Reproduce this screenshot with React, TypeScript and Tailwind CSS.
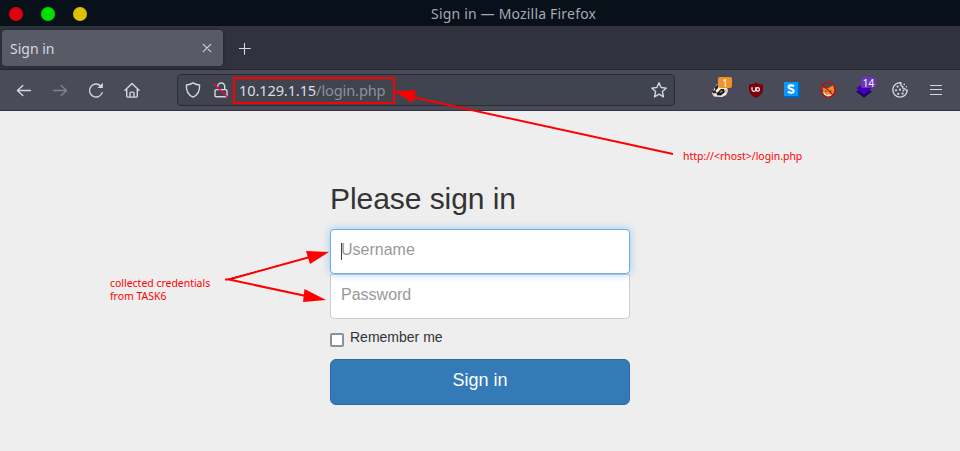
import React from "react";

const line = {
  fill: "none",
  stroke: "#d3d7e2",
  strokeWidth: 1.4,
  strokeLinecap: "round" as const,
  strokeLinejoin: "round" as const,
};

function Slot({ children, className = "" }: { children: React.ReactNode; className?: string }) {
  return <div className={`flex w-9 shrink-0 items-center justify-center ${className}`}>{children}</div>;
}

function Glyph({ children, className = "" }: { children: React.ReactNode; className?: string }) {
  return (
    <svg width="16" height="16" viewBox="0 0 16 16" className={`shrink-0 overflow-visible ${className}`} {...line}>
      {children}
    </svg>
  );
}

function TitleBar() {
  return (
    <header className="grid h-[26px] grid-cols-[431px_1fr] items-center bg-[#08101a]">
      <div className="flex gap-[18px] pl-[9px]">
        <span className="size-[14px] rounded-full bg-[#df000d]" />
        <span className="size-[14px] rounded-full bg-[#00df00]" />
        <span className="size-[14px] rounded-full bg-[#dfbf00]" />
      </div>
      <span className="whitespace-pre pt-px text-[14px] leading-[26px] tracking-[0.19px] text-[#a7abb1]">Sign in — Mozilla Firefox</span>
    </header>
  );
}

function TabBar() {
  return (
    <div className="flex h-11 items-center border-b border-[#20222c] bg-[#30333d] pl-[2px]">
      <div className="flex h-9 w-[221px] items-center justify-between rounded bg-[#585a66] pr-[11px] pl-2 shadow-[0_0_3px_rgba(0,0,0,0.35)]">
        <span className="pt-[2px] text-[14px] leading-9 text-[#d3d7e2]">Sign in</span>
        <svg width="10" height="10" viewBox="0 0 10 10" {...line} strokeWidth={1.1}>
          <path d="M1.3 1.3 8.7 8.7M8.7 1.3 1.3 8.7" />
        </svg>
      </div>
      <svg width="12" height="12" viewBox="0 0 12 12" className="mt-[2px] ml-4" {...line} strokeWidth={1.1}>
        <path d="M5.5 .3v11M.3 5.5h11" />
      </svg>
    </div>
  );
}

function AddressBar() {
  return (
    <div className="ml-[28px] flex h-8 w-[498px] items-center rounded-[4px] border border-[#292c37] bg-[#40444f] pl-[7px]">
      <Glyph>
        <path d="M8 .9C6 2.5 3.7 2.9 1.4 3c-.3 5.4 1.5 9.9 6.6 12.1 5.1-2.2 6.9-6.7 6.6-12.1C12.3 2.9 10 2.5 8 .9Z" />
      </Glyph>
      <Glyph className="ml-3">
        <path d="M3.2 7.6h9.6c.7 0 1.2.5 1.2 1.2v4.7c0 .7-.5 1.2-1.2 1.2H3.2c-.7 0-1.2-.5-1.2-1.2V8.8c0-.7.5-1.2 1.2-1.2ZM4.7 4.4a3.5 3.5 0 0 1 7 .2v2.7" />
        <path d="m1 2 13.5 13.3" stroke="#f00642" />
      </Glyph>
      <div className="ml-1 flex h-[27px] w-[162px] items-center border-2 border-[#ff0000] pl-1">
        <span className="whitespace-nowrap text-[14.6px] leading-5 tracking-[-0.13px] text-[#d9dce5]">
          10.129.1.15<span className="text-[#8c909b]">/login.php</span>
        </span>
      </div>
      <Glyph className="mr-[7px] ml-auto">
        <path d="m8 .8 2.1 4.7 5.2.6-3.9 3.5 1.1 5.2L8 12.2l-4.5 2.6 1.1-5.2L.7 6.1l5.2-.6Z" />
      </Glyph>
    </div>
  );
}

function Badge({ children, className }: { children: React.ReactNode; className: string }) {
  return (
    <span className={`absolute flex h-[11px] items-center justify-center rounded-[2px] text-[10px] leading-none text-white ${className}`}>
      {children}
    </span>
  );
}

function Extensions() {
  return (
    <div className="ml-auto flex items-center pr-[6px]">
      <Slot className="relative">
        <svg width="18" height="16" viewBox="0 0 18 16" className="overflow-visible">
          <path d="M2.5 8 6 2h9l2 7-2 4-4 2-8-.5-2-3Z" fill="#f4f1eb" />
          <path d="m4 5 3-3v4l-3 3ZM1 9l3-1 2 3-4 .5Z" fill="#29252a" />
          <path d="m5.500 11.500 4.500-4.500h3l1 3-4 3.500-4-.2Z" fill="#16161a" />
          <path d="m8 11 3-3 .5 2Z" fill="#aaa" />
          <path d="m13.500 7 3 .5.500 2.500-3 1ZM2 12l2 1-1 1.500Z" fill="#e9bd87" />
        </svg>
        <Badge className="top-[-5px] left-[16px] w-[14px] bg-[#f0932b]">1</Badge>
      </Slot>
      <Slot>
        <svg width="16" height="16" viewBox="0 0 16 16">
          <path d="M8 .5c2.2 1.5 4.2 2 7 2v5.2c0 4-3 6.3-7 8.1-4-1.8-7-4.1-7-8.1V2.5c2.8 0 4.8-.5 7-2Z" fill="#800008" />
          <path d="M4 5.3v2.2a1.9 1.9 0 0 0 3.8 0V5.3" fill="none" stroke="#fff" strokeWidth="1.2" />
          <circle cx="9.7" cy="7.4" r="1.7" fill="none" stroke="#fff" strokeWidth="1.2" />
        </svg>
      </Slot>
      <Slot>
        <svg width="16" height="16" viewBox="0 0 16 16">
          <path d="M0 14h14V0l2 2v14H2Z" fill="#0065b8" />
          <path d="M0 0h14v14H0Z" fill="#0797ff" />
          <path d="M10 4.2C8.4 3 4.5 3 4.5 5.1c0 2.3 5.2 1.3 5.2 3.8 0 2.4-4.1 2.1-5.8.8" fill="none" stroke="#fff" strokeWidth="2.1" />
        </svg>
      </Slot>
      <Slot>
        <svg width="16" height="16" viewBox="0 0 16 16">
          <path d="m2.5 5.500 3 1 4-1L13 3l1.500 5-2.500 5-4 2-4-3Z" fill="#f08b1d" />
          <path d="m2.500 9.500 2 1 2.500 3 1-1.500 2 1 4-3-2 3-3.500 2-4-2Z" fill="#eadfd4" />
          <path d="m5 9 1.500.7M10 9.500l1.500-.7" stroke="#372726" />
          <circle cx="8" cy="8" r="7.2" fill="none" stroke="#cf050c" strokeWidth="1.2" />
          <path d="m3 3 10 10" stroke="#cf050c" strokeWidth="1.1" />
        </svg>
      </Slot>
      <Slot className="relative">
        <svg width="18" height="18" viewBox="0 0 18 18">
          <path d="m1 10.5 8-4 8 4-8 6.2Z" fill="#25006f" />
          <path d="m1 7 8-5 8 5-8 6.5Z" fill="#4700b8" />
        </svg>
        <Badge className="top-[-4px] left-[15px] w-[15px] bg-[#6c35bd]">14</Badge>
      </Slot>
      <Slot>
        <Glyph>
          <path d="M9 .8A7.2 7.2 0 1 0 15.2 8c-1 .3-2-.2-2.4-1.2-1.5.4-2.5-.8-2-2.2C9 4 8.1 2.5 9 .8Z" />
          <g fill="#d3d7e2" stroke="none">
            <circle cx="5.6" cy="4.6" r="1.1" />
            <circle cx="4" cy="8.3" r="1.1" />
            <circle cx="8" cy="7.7" r="1.1" />
            <circle cx="6.2" cy="11.8" r="1.1" />
            <circle cx="10.6" cy="11.6" r="1.1" />
            <circle cx="11.4" cy="8.7" r=".9" />
            <circle cx="12.2" cy="2.4" r=".8" />
            <circle cx="14.3" cy="4.8" r=".7" />
          </g>
        </Glyph>
      </Slot>
      <Slot>
        <svg width="12" height="12" viewBox="0 0 12 12">
          <path d="M0 1.5h12M0 5.5h12M0 10.5h12" stroke="#d3d7e2" strokeWidth="1" />
        </svg>
      </Slot>
    </div>
  );
}

function NavBar() {
  return (
    <nav className="flex h-[41px] items-center border-b border-[#302f3c] bg-[#494c58] pl-[6px]">
      <Slot>
        <Glyph>
          <path d="M1.5 8.5h13M6.8 3.5 1.4 8.5l5.4 5" />
        </Glyph>
      </Slot>
      <Slot>
        <Glyph className="opacity-40">
          <path d="M1.5 8.5h13M9.2 3.5 14.6 8.5l-5.4 5" />
        </Glyph>
      </Slot>
      <Slot>
        <Glyph>
          <path d="M14.2 10.6A6.5 6.5 0 1 1 12.5 3.8" />
          <path d="M9.5 6h5.3V.8Z" fill="#d3d7e2" stroke="none" />
        </Glyph>
      </Slot>
      <Slot className="w-[35px]">
        <Glyph>
          <path d="M1 8.3 8 1.5l7 6.8M2.7 7v6.9c0 .7.5 1.2 1.2 1.2h8.2c.7 0 1.2-.5 1.2-1.2V7M6 14.7v-3.6c0-.6.4-1 1-1h2c.6 0 1 .4 1 1v3.6" />
        </Glyph>
      </Slot>
      <AddressBar />
      <Extensions />
    </nav>
  );
}

function SignInForm() {
  return (
    <form className="mx-auto w-[300px] pt-[71px] font-['Liberation_Sans',Arial,sans-serif] text-[#333]">
      <h2 className="mb-[14px] text-[30px] leading-[33px] tracking-[-0.06px]">Please sign in</h2>
      <div className="relative z-10 flex h-[45px] items-center rounded-[4px] border border-[#66afe9] bg-white px-[10px] pb-[4px] text-[16px] text-[#999] shadow-[0_0_8px_rgba(102,175,233,0.6)]">
        <span className="mt-[3px] h-[17px] w-px bg-[#444]" />
        <span className="-ml-px">Username</span>
      </div>
      <div className="flex h-[45px] items-center rounded-b-[4px] border border-[#ccc] bg-white px-[10px] pb-[4px] text-[16px] text-[#999]">
        Password
      </div>
      <label className="mt-[8px] flex h-5 items-center text-[14px] leading-5">
        <span className="mt-[5px] mr-[6px] size-[14px] rounded-[2px] border-2 border-[#8f8f9d] bg-white" />
        Remember me
      </label>
      <button type="button" className="mt-[12px] block h-[46px] w-full rounded-[6px] border border-[#2e6da4] bg-[#337ab7] pb-[3px] text-[18px] text-white">
        Sign in
      </button>
    </form>
  );
}

function Annotations() {
  return (
    <div className="pointer-events-none absolute inset-0 z-20 text-[10.45px] leading-[13px] text-[#ff0000]">
      <svg width="960" height="451" className="absolute inset-0">
        <g stroke="#ff0000" strokeWidth="2">
          <path d="M673 154 412 97M225 279.5h4L310 257M229 279.5 306 296" />
        </g>
        <path d="m394 91.5 22-1.5-3 13ZM329 252l-23-1 4 13ZM326 300l-21.5-11-1.5 13Z" fill="#ff0000" />
      </svg>
      <span className="absolute top-[150px] left-[683px] whitespace-nowrap">http://&lt;rhost&gt;/login.php</span>
      <span className="absolute top-[277px] left-[110px] whitespace-nowrap">
        collected credentials
        <br />
        from TASK6
      </span>
    </div>
  );
}

export default function App() {
  return (
    <div className="relative h-[451px] w-[960px] overflow-hidden bg-[#eee] font-['Noto_Sans',sans-serif]">
      <TitleBar />
      <TabBar />
      <NavBar />
      <SignInForm />
      <Annotations />
    </div>
  );
}
